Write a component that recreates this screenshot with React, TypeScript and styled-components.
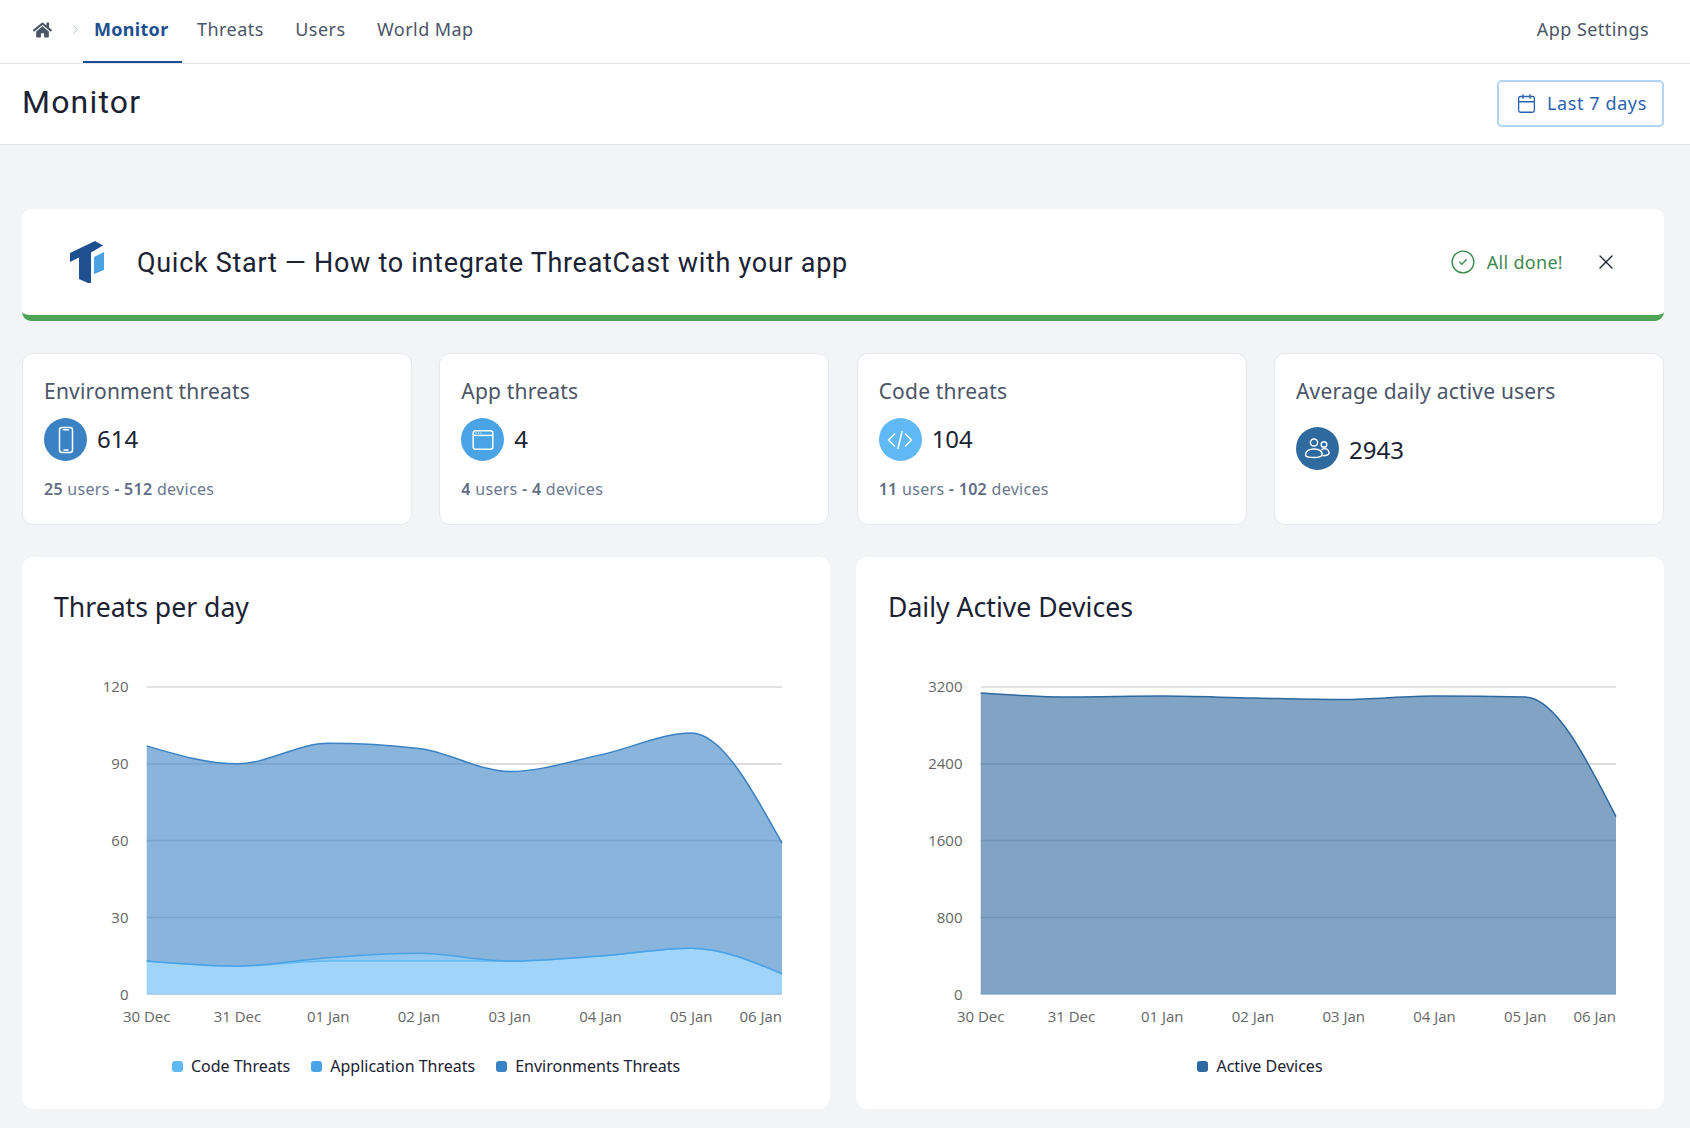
import React from 'react';
import styled, { createGlobalStyle } from 'styled-components';
import { FaHome } from 'react-icons/fa';
import { ChevronRight, Calendar, CircleCheck, X } from 'lucide-react';

const Global = createGlobalStyle`
  html, body { margin: 0; padding: 0; background: #f2f4f6; }
  body { font-family: "Noto Sans", "Open Sans", sans-serif; color: #1a2233; }
  * { box-sizing: border-box; }
`;

const HEAD = `"Roboto", "Noto Sans", sans-serif`;

const Page = styled.div`
  width: 1690px;
  height: 1128px;
  overflow: hidden;
`;
const Nav = styled.nav`
  height: 64px;
  background: #fff;
  border-bottom: 1px solid #e4e7eb;
  display: flex;
  align-items: stretch;
  padding: 0 41px 0 33px;
`;
const HomeLink = styled.div`
  display: flex;
  align-items: center;
  color: #4a5568;
  font-size: 20px;
  width: 50px;
  padding-bottom: 4px;
`;
const Crumb = styled.span`
  display: flex;
  color: #a9b2c0;
  margin-left: 16px;
`;
const Tabs = styled.div`
  display: flex;
  gap: 3.5px;
  flex: 1;
`;
const Tab = styled.a<{ $active?: boolean }>`
  display: flex;
  align-items: center;
  height: 63px;
  padding: ${p => (p.$active ? '0 13px 4px 11px' : '0 14px 4px')};
  font-size: 18px;
  letter-spacing: ${p => (p.$active ? '0.3px' : '0.45px')};
  font-weight: ${p => (p.$active ? 700 : 400)};
  color: ${p => (p.$active ? '#1e4f91' : '#4a5568')};
  border-bottom: 2px solid ${p => (p.$active ? '#1e4f91' : 'transparent')};
  margin-bottom: -1px;
  margin-right: ${p => (p.$active ? '-2px' : '0')};
`;
const NavRight = styled.a`
  display: flex;
  align-items: center;
  padding-bottom: 6px;
  font-size: 18px;
  letter-spacing: 0.45px;
  color: #4a5568;
`;
const Header = styled.header`
  height: 81px;
  background: #fff;
  border-bottom: 1px solid #e4e7eb;
  display: flex;
  align-items: center;
  justify-content: space-between;
  padding: 0 26px 0 22px;
`;
const Title = styled.h1`
  margin: -4px 0 0;
  font-family: ${HEAD};
  font-weight: 400;
  font-size: 32px;
  letter-spacing: 1.2px;
  color: #1a2233;
`;
const DateButton = styled.button`
  width: 167px;
  height: 47px;
  margin-top: -2px;
  border: 2px solid #b2d5f8;
  border-radius: 5px;
  background: #fff;
  color: #2b62b0;
  display: flex;
  align-items: center;
  gap: 10px;
  padding: 0 0 0 17px;
  font-family: inherit;
  font-size: 18px;
  letter-spacing: 0.6px;
`;
const Content = styled.main`
  padding: 64px 26px 0 22px;
  display: flex;
  flex-direction: column;
`;
const QuickStart = styled.section`
  height: 112px;
  background: #fff;
  border-radius: 9px;
  border-bottom: 6px solid #4ea456;
  display: flex;
  align-items: center;
  padding: 0 46px 0 47px;
`;
const QuickTitle = styled.h2`
  margin: 2px 0 0 32px;
  flex: 1;
  font-family: ${HEAD};
  font-weight: 400;
  font-size: 27px;
  letter-spacing: 0.7px;
  color: #1a2233;
`;
const Done = styled.div`
  display: flex;
  align-items: center;
  gap: 11px;
  color: #3f8a50;
  font-size: 18px;
  letter-spacing: 0.3px;
  margin-right: 31px;
`;
const Close = styled.span`
  display: flex;
  color: #1a2233;
`;
const Stats = styled.div`
  display: grid;
  grid-template-columns: repeat(4, 1fr);
  gap: 27.3px;
  margin-top: 32px;
`;
const StatCard = styled.div`
  height: 172px;
  background: #fff;
  border: 1px solid #e6e9ee;
  border-radius: 11px;
  padding: 23px 21px;
`;
const StatTitle = styled.div`
  font-size: 21px;
  line-height: 28px;
  letter-spacing: 0.2px;
  color: #4a5568;
`;
const StatRow = styled.div<{ $solo?: boolean }>`
  display: flex;
  align-items: center;
  gap: 10px;
  margin-top: ${p => (p.$solo ? '22px' : '13px')};
`;
const IconCircle = styled.span<{ $color: string }>`
  width: 43px;
  height: 43px;
  border-radius: 50%;
  background: ${p => p.$color};
  display: flex;
  align-items: center;
  justify-content: center;
  color: #fff;
`;
const StatValue = styled.span<{ $solo?: boolean }>`
  font-size: 24px;
  line-height: 34px;
  margin-top: ${p => (p.$solo ? '2px' : '-2px')};
  color: #1a2233;
`;
const StatSub = styled.div`
  margin-top: 18px;
  font-size: 16px;
  line-height: 20px;
  letter-spacing: 0.3px;
  color: #6b7890;
  b { font-weight: 600; color: #5f6d85; }
`;
const Charts = styled.div`
  display: grid;
  grid-template-columns: 1fr 1fr;
  gap: 26px;
  margin-top: 32px;
`;
const ChartCard = styled.section`
  height: 552px;
  background: #fff;
  border-radius: 11px;
  display: flex;
  flex-direction: column;
  box-shadow: 0 0 1px rgba(0, 0, 0, 0.04);
`;
const ChartTitle = styled.h3<{ $inset: number }>`
  margin: 32px 0 0 ${p => p.$inset}px;
  height: 38px;
  line-height: 36px;
  font-family: "Noto Sans", sans-serif;
  font-weight: 400;
  font-size: 26.6px;
  color: #1a2233;
`;
const ChartSvg = styled.svg`
  display: block;
  margin-top: 33px;
  width: 100%;
  height: 380px;
  text {
    font-family: "Open Sans", "Noto Sans", sans-serif;
    font-size: 15px;
    fill: #666;
  }
`;
const Legend = styled.div`
  display: flex;
  justify-content: center;
  gap: 21px;
  margin-top: 15px;
`;
const LegendItem = styled.div`
  display: flex;
  align-items: center;
  gap: 8px;
  font-size: 16px;
  line-height: 22px;
  color: #1a2233;
`;
const Swatch = styled.span<{ $color: string }>`
  width: 11px;
  height: 11px;
  border-radius: 3px;
  background: ${p => p.$color};
`;

const LEFT = 124.7;
const RIGHT = 760;
const TOP = 27;
const BOTTOM = 334.3;
const STEP = (RIGHT - LEFT) / 7;

function tangents(ys: number[]): number[] {
  const n = ys.length;
  const d: number[] = [];
  for (let i = 0; i < n - 1; i++) d.push((ys[i + 1] - ys[i]) / STEP);
  const m: number[] = new Array(n).fill(0);
  for (let i = 1; i < n - 1; i++) {
    const a = d[i - 1], b = d[i];
    if (a * b <= 0) m[i] = 0;
    else m[i] = (Math.sign(a) + Math.sign(b)) * Math.min(Math.abs(a), Math.abs(b), 0.25 * Math.abs(a + b));
  }
  m[0] = (3 * d[0] - m[1]) / 2;
  m[n - 1] = (3 * d[n - 2] - m[n - 2]) / 2;
  return m;
}
function curve(ys: number[]): string {
  const m = tangents(ys);
  let out = '';
  for (let i = 0; i < ys.length - 1; i++) {
    const x0 = LEFT + i * STEP, x1 = x0 + STEP, h = STEP / 3;
    out += ` C${x0 + h} ${ys[i] + m[i] * h} ${x1 - h} ${ys[i + 1] - m[i + 1] * h} ${x1} ${ys[i + 1]}`;
  }
  return out;
}
function reverseCurve(ys: number[]): string {
  const m = tangents(ys);
  let out = '';
  for (let i = ys.length - 1; i > 0; i--) {
    const x1 = LEFT + i * STEP, x0 = x1 - STEP, h = STEP / 3;
    out += ` C${x1 - h} ${ys[i] - m[i] * h} ${x0 + h} ${ys[i - 1] + m[i - 1] * h} ${x0} ${ys[i - 1]}`;
  }
  return out;
}

const DAYS = ['30 Dec', '31 Dec', '01 Jan', '02 Jan', '03 Jan', '04 Jan', '05 Jan', '06 Jan'];

type Series = { color: string; values: number[] };

function AreaChart({ max, series }: { max: number; series: Series[] }) {
  const y = (v: number) => BOTTOM - (v / max) * (BOTTOM - TOP);
  const ticks = [0, 1, 2, 3, 4].map(i => (max / 4) * i);
  let base = series[0].values.map(() => 0);
  const bands = series.map(s => {
    const top = s.values.map(y);
    const bot = base.map(y);
    base = s.values;
    return { color: s.color, top, bot };
  });
  return (
    <ChartSvg viewBox="0 0 808 380">
      {ticks.map(t => (
        <g key={t}>
          <line x1={LEFT} x2={RIGHT} y1={y(t)} y2={y(t)} stroke={t === 0 ? '#ccd6eb' : '#d9d9d9'} strokeWidth="1.6" />
          <text x="106.5" y={y(t) + 5.4} textAnchor="end">{t}</text>
        </g>
      ))}
      {DAYS.map((d, i) => (
        <text key={d} x={LEFT + i * STEP} y="362" textAnchor={i === 7 ? 'end' : 'middle'}>{d}</text>
      ))}
      {bands.map(b => (
        <path
          key={b.color}
          d={`M${LEFT} ${b.top[0]}${curve(b.top)} L${RIGHT} ${b.bot[7]}${reverseCurve(b.bot)} Z`}
          fill={b.color}
          fillOpacity="0.6"
        />
      ))}
      {bands.map(b => (
        <path key={b.color} d={`M${LEFT} ${b.top[0]}${curve(b.top)}`} fill="none" stroke={b.color} strokeWidth="1.5" />
      ))}
    </ChartSvg>
  );
}

const Logo = () => (
  <svg width="36" height="44" viewBox="69 240 36 44">
    <path d="M70 253 L95 241 L103 245.5 L91 252.5 L91 283 L88 283 L79 279 L79 257.5 L70 262 Z" fill="#1e4f91" />
    <path d="M94 257 L104 252 L104 270 L94 274 Z" fill="#4aa3e0" />
  </svg>
);
const PhoneIcon = () => (
  <svg width="28" height="28" viewBox="0 0 28 28" fill="none" stroke="#fff" strokeWidth="1.5">
    <rect x="7.5" y="1.5" width="13" height="25" rx="2.5" />
    <path d="M11.5 3.8h5M12 24h4" strokeLinecap="round" />
  </svg>
);
const BrowserIcon = () => (
  <svg width="24" height="24" viewBox="0 0 24 24" fill="none" stroke="#fff" strokeWidth="1.5">
    <rect x="2.2" y="2.8" width="19.6" height="18.4" rx="2.2" />
    <path d="M2.5 7.4h19" />
    <path d="M4.5 5.1h1M7 5.1h1M9.5 5.1h1" strokeWidth="1.2" />
  </svg>
);
const CodeIcon = () => (
  <svg width="28" height="24" viewBox="0 0 28 24" fill="none" stroke="#fff" strokeWidth="1.5" strokeLinecap="round" strokeLinejoin="round">
    <path d="M8.5 6 L2.5 12 L8.5 18M19.5 6 L25.5 12 L19.5 18M16 3.5 L12 20.5" />
  </svg>
);
const UsersIcon = () => (
  <svg width="28" height="26" viewBox="0 0 28 26" fill="none" stroke="#fff" strokeWidth="1.5">
    <circle cx="11" cy="6.5" r="3.6" />
    <circle cx="21" cy="8.5" r="2.8" />
    <path d="M2.5 19c0-4 4-6 8.500-6 3.500 0 6 1 7.500 3 .8 1 .8 2.200.5 3-.6 1.600-4 2.500-8 2.500-5 0-8.500-.9-8.500-2.500z" />
    <path d="M18.500 14c1-1 2-1.500 3-1.500 2.500 0 4.500 2 4.500 4.500 0 2-2 2.700-6.500 2.700" />
  </svg>
);

const stats = [
  { title: 'Environment threats', color: '#3a82c4', icon: <PhoneIcon />, value: '614', users: '25', devices: '512' },
  { title: 'App threats', color: '#4aa3e5', icon: <BrowserIcon />, value: '4', users: '4', devices: '4' },
  { title: 'Code threats', color: '#60b8f5', icon: <CodeIcon />, value: '104', users: '11', devices: '102' },
  { title: 'Average daily active users', color: '#2e6a9e', icon: <UsersIcon />, value: '2943' },
];

const threatSeries: Series[] = [
  { color: '#60b8f5', values: [13, 11, 13, 13, 13, 15, 18, 8] },
  { color: '#4aa3e5', values: [13, 11, 14.3, 16, 13, 15, 18, 8] },
  { color: '#3a82c4', values: [97, 90, 98, 96, 87, 93.5, 102, 59] },
];
const deviceSeries: Series[] = [
  { color: '#2d689f', values: [3138, 3095, 3105, 3085, 3070, 3107, 3096, 1850] },
];

export default function App() {
  return (
    <Page>
      <Global />
      <Nav>
        <HomeLink>
          <FaHome />
          <Crumb><ChevronRight size={15} strokeWidth={1.5} /></Crumb>
        </HomeLink>
        <Tabs>
          <Tab $active>Monitor</Tab>
          <Tab>Threats</Tab>
          <Tab>Users</Tab>
          <Tab>World Map</Tab>
        </Tabs>
        <NavRight>App Settings</NavRight>
      </Nav>
      <Header>
        <Title>Monitor</Title>
        <DateButton>
          <Calendar size={21} strokeWidth={1.5} />
          Last 7 days
        </DateButton>
      </Header>
      <Content>
        <QuickStart>
          <Logo />
          <QuickTitle>Quick Start — How to integrate ThreatCast with your app</QuickTitle>
          <Done>
            <CircleCheck size={26} strokeWidth={1.3} />
            All done!
          </Done>
          <Close><X size={24} strokeWidth={1.4} /></Close>
        </QuickStart>
        <Stats>
          {stats.map(s => (
            <StatCard key={s.title}>
              <StatTitle>{s.title}</StatTitle>
              <StatRow $solo={!s.users}>
                <IconCircle $color={s.color}>{s.icon}</IconCircle>
                <StatValue $solo={!s.users}>{s.value}</StatValue>
              </StatRow>
              {s.users && (
                <StatSub><b>{s.users}</b> users <b>-</b> <b>{s.devices}</b> devices</StatSub>
              )}
            </StatCard>
          ))}
        </Stats>
        <Charts>
          <ChartCard>
            <ChartTitle $inset={32}>Threats per day</ChartTitle>
            <AreaChart max={120} series={threatSeries} />
            <Legend>
              <LegendItem><Swatch $color="#60b8f5" />Code Threats</LegendItem>
              <LegendItem><Swatch $color="#4aa3e5" />Application Threats</LegendItem>
              <LegendItem><Swatch $color="#3a82c4" />Environments Threats</LegendItem>
            </Legend>
          </ChartCard>
          <ChartCard>
            <ChartTitle $inset={32}>Daily Active Devices</ChartTitle>
            <AreaChart max={3200} series={deviceSeries} />
            <Legend>
              <LegendItem><Swatch $color="#2d689f" />Active Devices</LegendItem>
            </Legend>
          </ChartCard>
        </Charts>
      </Content>
    </Page>
  );
}
